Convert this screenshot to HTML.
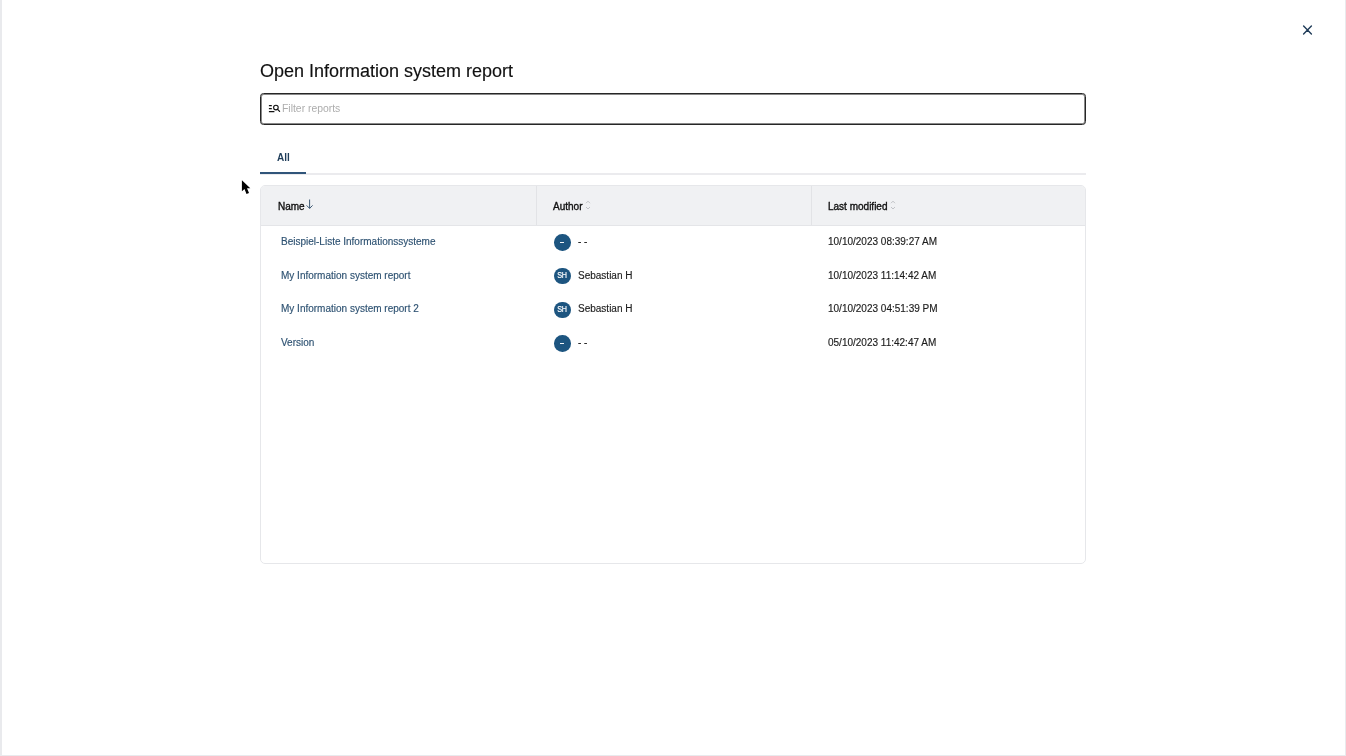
<!DOCTYPE html>
<html><head><meta charset="utf-8">
<style>html{background:#fff}
*{box-sizing:border-box;margin:0;padding:0}
html,body{width:1346px;height:756px;overflow:hidden;font-family:"Liberation Sans",sans-serif;}
.abs{position:absolute}
#lb{left:0;top:0;width:2px;height:756px;background:#e9eaed}
#rb{left:1345px;top:0;width:1px;height:756px;background:#e9eaed}
#bb{left:0;top:755px;width:1346px;height:1px;background:#e9eaed}
#title{left:260px;top:59px;font-size:18px;color:#111;white-space:nowrap;line-height:24px;-webkit-text-stroke:0.15px #111}
#input{left:260px;top:93px;width:826px;height:32px;border:1px solid #262626;border-radius:3.5px;box-shadow:inset 0 0 0 1px rgba(40,40,40,0.55)}
#ph{left:282px;top:103px;font-size:10.4px;color:#adadad;line-height:12px;white-space:nowrap}
#tab{left:277px;top:152px;font-size:10px;font-weight:700;color:#1f3d5a;line-height:12px}
#tabline{left:260px;top:173px;width:826px;height:2px;background:#ebebee}
#tabul{left:260px;top:172px;width:46px;height:2px;background:#30557a}
#table{left:260px;top:185px;width:826px;height:379px;border:1px solid #e6e7ea;border-radius:5px;overflow:hidden}
#thead{left:0;top:0;width:824px;height:40px;background:#f0f1f3;border-bottom:1px solid #e4e5e8}
.div{top:0;width:1px;height:39px;background:#e2e3e6}
.th{font-size:10px;color:#111;line-height:12px;white-space:nowrap;-webkit-text-stroke:0.35px #111}
.td{font-size:10px;line-height:12px;white-space:nowrap;-webkit-text-stroke:0.15px currentColor}
.lnk{color:#2e5272}
.dt{color:#1c1c1c}
.av{width:16.6px;height:16.6px;border-radius:50%;background:#1d5580;color:#fff;font-size:9px;text-align:center;line-height:16.6px}
.ini{display:inline-block;transform:scaleX(0.8);-webkit-text-stroke:0.2px #fff;letter-spacing:-0.3px;position:relative;top:-0.3px}
</style></head><body><div style="position:absolute;left:0;top:0;width:1346px;height:756px;will-change:transform">
<div class="abs" id="lb"></div>
<div class="abs" id="rb"></div>
<div class="abs" id="bb"></div>

<svg class="abs" style="left:1300px;top:23px" width="15" height="15" viewBox="0 0 15 15">
<path d="M3.6 3.1 L11.4 10.9 M11.4 3.1 L3.6 10.9" stroke="#1f3b58" stroke-width="1.4" stroke-linecap="round" fill="none"/>
</svg>

<div class="abs" id="title">Open Information system report</div>

<div class="abs" id="input"></div>
<svg class="abs" style="left:264px;top:100px" width="20" height="16" viewBox="0 0 20 16">
<g stroke="#111" fill="none" stroke-linecap="round">
<path d="M4.9 5.7 H7.8 M4.9 8.6 H7.8 M4.9 11.5 H10.4" stroke-width="1.25" stroke-linecap="butt"/>
<circle cx="11.9" cy="7.6" r="2.3" stroke-width="1.1"/>
<path d="M13.6 9.4 L15.6 11.4" stroke-width="1.2"/>
</g>
</svg>
<div class="abs" id="ph">Filter reports</div>

<div class="abs" id="tab">All</div>
<div class="abs" id="tabline"></div>
<div class="abs" id="tabul"></div>

<div class="abs" id="table">
  <div class="abs" id="thead">
    <div class="abs div" style="left:275px"></div>
    <div class="abs div" style="left:550px"></div>
    <div class="abs th" style="left:17px;top:14.5px">Name</div>
    <div class="abs th" style="left:292px;top:14.5px">Author</div>
    <div class="abs th" style="left:567px;top:14.5px">Last modified</div>

    <svg class="abs" style="left:45px;top:13px" width="8" height="11" viewBox="0 0 8 11"><path d="M3.6 0.5 V9.4 M0.6 6.4 L3.6 9.4 L6.6 6.4" stroke="#3d5a74" stroke-width="1" fill="none"/></svg>
    <svg class="abs" style="left:324px;top:14px" width="6" height="11" viewBox="0 0 6 11"><path d="M1 3.2 L3 1.2 L5 3.2 M1 7 L3 9 L5 7" stroke="#b4b6ba" stroke-width="0.8" fill="none"/></svg>
    <svg class="abs" style="left:629px;top:14px" width="6" height="11" viewBox="0 0 6 11"><path d="M1 3.2 L3 1.2 L5 3.2 M1 7 L3 9 L5 7" stroke="#b4b6ba" stroke-width="0.8" fill="none"/></svg>
  </div>
  <div class="abs td lnk" style="left:20px;top:50.1px">Beispiel-Liste Informationssysteme</div>
  <div class="abs av" style="left:293px;top:48.3px"><div class="abs" style="left:6.2px;top:7.8px;width:4.2px;height:1px;background:#f4f6f8"></div></div>
  <div class="abs td dt" style="left:317px;top:50.1px">- -</div>
  <div class="abs td dt" style="left:567px;top:50.1px">10/10/2023 08:39:27 AM</div>
  <div class="abs td lnk" style="left:20px;top:83.8px">My Information system report</div>
  <div class="abs av" style="left:293px;top:81.7px"><span class="ini">SH</span></div>
  <div class="abs td dt" style="left:317px;top:83.8px">Sebastian H</div>
  <div class="abs td dt" style="left:567px;top:83.8px">10/10/2023 11:14:42 AM</div>
  <div class="abs td lnk" style="left:20px;top:117.3px">My Information system report 2</div>
  <div class="abs av" style="left:293px;top:115.5px"><span class="ini">SH</span></div>
  <div class="abs td dt" style="left:317px;top:117.3px">Sebastian H</div>
  <div class="abs td dt" style="left:567px;top:117.3px">10/10/2023 04:51:39 PM</div>
  <div class="abs td lnk" style="left:20px;top:151.3px">Version</div>
  <div class="abs av" style="left:293px;top:149.2px"><div class="abs" style="left:6.2px;top:7.8px;width:4.2px;height:1px;background:#f4f6f8"></div></div>
  <div class="abs td dt" style="left:317px;top:151.3px">- -</div>
  <div class="abs td dt" style="left:567px;top:151.3px">05/10/2023 11:42:47 AM</div>
</div>

<svg class="abs" style="left:236px;top:176px" width="20" height="24" viewBox="236 176 20 24">
<path d="M241.9 180.3 L241.9 191.3 L244.5 188.9 L246.5 194.1 L249.0 193.1 L247.0 188.3 L250.3 188.3 Z" fill="#000"/>
</svg>
</div></body></html>
